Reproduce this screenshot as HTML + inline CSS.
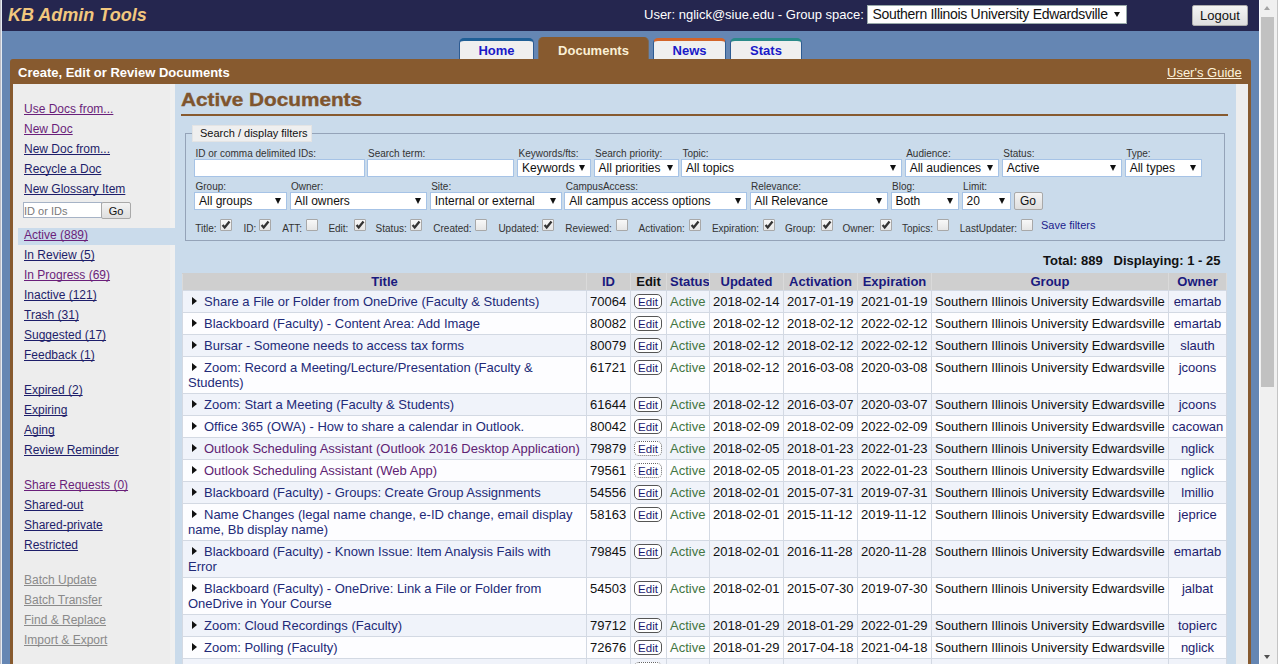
<!DOCTYPE html>
<html><head><meta charset="utf-8">
<style>
*{box-sizing:border-box}
html,body{margin:0;padding:0;width:1278px;height:664px;overflow:hidden;font-family:"Liberation Sans",sans-serif;background:#6586b3}
.abs{position:absolute}
#lstrip{left:0;top:0;width:2px;height:664px;background:#bcbcc4;border-right:1px solid #e6ecf4}
#hdr{left:2px;top:0;width:1257px;height:31px;background:#25264f}
#title{left:8px;top:5px;font-size:18px;font-weight:bold;font-style:italic;color:#f2c77e;white-space:nowrap}
#user{left:644px;top:7px;font-size:13px;color:#fff;white-space:nowrap}
#gsel{left:867px;top:5px;width:260px;height:19px;background:#fff;border:1px solid #9aa;font-size:14px;letter-spacing:-0.3px;color:#111;padding:0 0 0 4.5px;white-space:nowrap}
#gsel .ar{position:absolute;right:6px;top:6px;width:0;height:0;border-left:3.5px solid transparent;border-right:3.5px solid transparent;border-top:5.5px solid #111}
#logout{left:1192px;top:5px;width:56px;height:21px;background:linear-gradient(#f4f4f4,#dedede);border:1px solid #adadad;border-radius:2px;font-size:13px;color:#111;text-align:center;padding-top:2px}
#sb{left:1259px;top:0;width:19px;height:664px;background:#f0f0f0}
#sbth{left:1261px;top:17px;width:13px;height:370px;background:#c1c1c1}
.tab{position:absolute;top:38px;height:21px;background:#efefef;border-top:3px solid #1f5f96;border-left:1px solid #2d5b92;border-right:1px solid #2d5b92;border-radius:5px 5px 0 0;font-size:13px;font-weight:bold;color:#1a1ac8;text-align:center;padding-top:2px}
#box{left:10px;top:59px;width:1241px;height:620px;background:#875a2f;border-radius:3px 3px 0 0}
#boxh{left:18px;top:65px;font-size:13px;font-weight:bold;color:#fff;white-space:nowrap}
#guide{left:1167px;top:65px;font-size:13px;color:#fdf3dc;text-decoration:underline;text-decoration-skip-ink:none;white-space:nowrap}
#side{left:13px;top:84px;width:162px;height:600px;background:#ededed;border-right:5px solid #f0f0f0}
#content{left:175px;top:84px;width:1061px;height:600px;background:#cadbeb}
#rstrip{left:1236px;top:84px;width:12px;height:600px;background:#eeeeee}
.sl{position:absolute;left:24px;font-size:12px;white-space:nowrap;text-decoration:underline;text-decoration-skip-ink:none;color:#1e1e6a}
.sl.v{color:#6a1f7a}
.sl.g{color:#8a8a8a}
#activebar{left:18px;top:228px;width:157px;height:17px;background:#cadbeb}
#h1{left:181px;top:90px;font-size:18px;font-weight:bold;color:#7f552e;-webkit-text-stroke:0.35px #7f552e;white-space:nowrap;transform:scaleX(1.153);transform-origin:0 0}
#h1line{left:181px;top:114px;width:1047px;height:2px;background:#875a2f}
#fs{left:185px;top:133px;width:1040px;height:108px;border:1px solid #94a3b8}
#legend{left:192px;top:125px;width:120px;height:17px;background:#efefef;border:1px solid #e4e4e4;font-size:11px;color:#111;padding:1px 0 0 7px;white-space:nowrap}
.lb{position:absolute;font-size:10px;color:#333;white-space:nowrap}
.sel{position:absolute;height:18px;background:#fff;border:1px solid #a6c3e6;font-size:12px;color:#111;padding:1px 0 0 4px;white-space:nowrap;overflow:hidden}
.sel .ar{position:absolute;right:5px;top:5px;width:0;height:0;border-left:3.5px solid transparent;border-right:3.5px solid transparent;border-top:6px solid #111}
.inp{position:absolute;height:18px;background:#fff;border:1px solid #a6c3e6}
.btn{position:absolute;background:linear-gradient(#f4f4f4,#dedede);border:1px solid #a9a9a9;border-radius:2px;font-size:12px;color:#111;text-align:center}
.cl{position:absolute;top:223px;font-size:10px;color:#333;white-space:nowrap}
.cb{position:absolute;top:219px;width:12px;height:12px;border:1px solid #a8a8a8;border-radius:1px;background:linear-gradient(#f8f8f8,#e6e6e6)}
.cb svg{position:absolute;left:-1px;top:-1px}
#savef{left:1041px;top:219px;font-size:11px;color:#1c1c8c;white-space:nowrap}
#total{left:1043px;top:253px;font-size:13px;font-weight:bold;color:#111;white-space:nowrap}
table{position:absolute;left:182px;top:273px;border-collapse:collapse;table-layout:fixed;width:1045px;font-size:13px;line-height:15px}
td,th{border:1px solid #d3d9e3;padding:3px;vertical-align:top;overflow:hidden}
th{background:#cfcfcf;font-weight:bold;color:#1a1a7e;padding:0 3px 1px 3px;border-color:#cfcfcf #dadada;border-bottom-color:#d3d9e3;text-align:center}
tr.o td{background:#f0f3fa}
tr.e td{background:#fdfdff}
td.t{color:#222a78;padding-left:5px;padding-right:5px}
td.t.v{color:#5e2272}
.tri{display:inline-block;width:0;height:0;border-top:4px solid transparent;border-bottom:4px solid transparent;border-left:5px solid #111;margin:0 7px 0 4px;vertical-align:1px}
td.id{color:#111}
td.ed{padding:3px 0 0 3px;line-height:0}
.eb{display:block;width:28px;height:15px;border:1px solid #555;border-radius:5px;font-size:11.5px;line-height:13px;padding-top:1px;color:#1a1a70;text-align:center;background:#fff}
.eb.d{border:1px dotted #666}
td.st{color:#437543}
td.dt{color:#111}
td.gr{color:#111}
td.ow{color:#1c1c6e;text-align:center}
</style></head><body>
<div id="lstrip" class="abs"></div>
<div id="hdr" class="abs"></div>
<div id="title" class="abs">KB Admin Tools</div>
<div id="user" class="abs">User: nglick@siue.edu - Group space:</div>
<div id="gsel" class="abs">Southern Illinois University Edwardsville<span class="ar"></span></div>
<div id="logout" class="abs">Logout</div>
<div id="sb" class="abs"></div><div id="sbth" class="abs"></div><div class="abs" style="left:1259px;top:0;width:1px;height:664px;background:#fafcff"></div><div class="abs" style="left:1277px;top:0;width:1px;height:664px;background:#c4c4c4"></div><div class="abs" style="left:1264px;top:6px;width:0;height:0;border-left:3.5px solid transparent;border-right:3.5px solid transparent;border-bottom:4.5px solid #a3a3a3"></div><div class="abs" style="left:1264px;top:654.5px;width:0;height:0;border-left:3.5px solid transparent;border-right:3.5px solid transparent;border-top:4.5px solid #505050"></div>
<div class="tab" style="left:459px;width:75px;border-top-color:#1f5f96">Home</div>
<div class="tab" style="left:538px;width:111px;top:37px;height:22px;background:#875a2f;border-top:0;border-color:#7a6a5a;color:#fbf0d6;padding-top:6px">Documents</div>
<div class="tab" style="left:653px;width:73px;border-top-color:#d2642a">News</div>
<div class="tab" style="left:730px;width:72px;border-top-color:#2a8a8a">Stats</div>
<div id="box" class="abs"></div>
<div id="boxh" class="abs">Create, Edit or Review Documents</div>
<div id="guide" class="abs">User's Guide</div>
<div id="side" class="abs"></div><div id="content" class="abs"></div><div id="rstrip" class="abs"></div>
<div id="activebar" class="abs"></div>
<div class="sl v" style="top:102px">Use Docs from...</div>
<div class="sl v" style="top:122px">New Doc</div>
<div class="sl " style="top:142px">New Doc from...</div>
<div class="sl " style="top:162px">Recycle a Doc</div>
<div class="sl " style="top:182px">New Glossary Item</div>
<div class="sl v" style="top:228px">Active (889)</div>
<div class="sl " style="top:248px">In Review (5)</div>
<div class="sl v" style="top:268px">In Progress (69)</div>
<div class="sl " style="top:288px">Inactive (121)</div>
<div class="sl " style="top:308px">Trash (31)</div>
<div class="sl " style="top:328px">Suggested (17)</div>
<div class="sl " style="top:348px">Feedback (1)</div>
<div class="sl " style="top:383px">Expired (2)</div>
<div class="sl " style="top:403px">Expiring</div>
<div class="sl " style="top:423px">Aging</div>
<div class="sl " style="top:443px">Review Reminder</div>
<div class="sl v" style="top:478px">Share Requests (0)</div>
<div class="sl " style="top:498px">Shared-out</div>
<div class="sl " style="top:518px">Shared-private</div>
<div class="sl " style="top:538px">Restricted</div>
<div class="sl g" style="top:573px">Batch Update</div>
<div class="sl g" style="top:593px">Batch Transfer</div>
<div class="sl g" style="top:613px">Find &amp; Replace</div>
<div class="sl g" style="top:633px">Import &amp; Export</div>
<div class="inp" style="left:23px;top:202px;width:79px;height:16px;border-color:#a6b3c6;font-size:11px;color:#7a7a7a;padding:2px 0 0 0;white-space:nowrap">ID or IDs</div>
<div class="btn" style="left:101px;top:202px;width:30px;height:17px;font-size:11px;padding-top:2px">Go</div>
<div id="h1" class="abs">Active Documents</div>
<div id="h1line" class="abs"></div>
<div id="fs" class="abs"></div>
<div id="legend" class="abs">Search / display filters</div>
<div class="lb" style="left:195.5px;top:148px">ID or comma delimited IDs:</div>
<div class="inp" style="left:194px;top:159px;width:170.5px"></div>
<div class="lb" style="left:368.0px;top:148px">Search term:</div>
<div class="inp" style="left:366.5px;top:159px;width:147.0px"></div>
<div class="lb" style="left:518.5px;top:148px">Keywords/fts:</div>
<div class="sel" style="left:517px;top:159px;width:74px">Keywords<span class="ar"></span></div>
<div class="lb" style="left:595.0px;top:148px">Search priority:</div>
<div class="sel" style="left:593.5px;top:159px;width:85.0px">All priorities<span class="ar"></span></div>
<div class="lb" style="left:682.5px;top:148px">Topic:</div>
<div class="sel" style="left:681px;top:159px;width:221px">All topics<span class="ar"></span></div>
<div class="lb" style="left:906.2px;top:148px">Audience:</div>
<div class="sel" style="left:904.7px;top:159px;width:94.29999999999995px">All audiences<span class="ar"></span></div>
<div class="lb" style="left:1003.3px;top:148px">Status:</div>
<div class="sel" style="left:1001.8px;top:159px;width:120.20000000000005px">Active<span class="ar"></span></div>
<div class="lb" style="left:1126.2px;top:148px">Type:</div>
<div class="sel" style="left:1124.7px;top:159px;width:77.59999999999991px">All types<span class="ar"></span></div>
<div class="lb" style="left:195.5px;top:181px">Group:</div>
<div class="sel" style="left:194px;top:192px;width:93.19999999999999px">All groups<span class="ar"></span></div>
<div class="lb" style="left:291.0px;top:181px">Owner:</div>
<div class="sel" style="left:289.5px;top:192px;width:137.5px">All owners<span class="ar"></span></div>
<div class="lb" style="left:431.2px;top:181px">Site:</div>
<div class="sel" style="left:429.7px;top:192px;width:132.3px">Internal or external<span class="ar"></span></div>
<div class="lb" style="left:565.7px;top:181px">CampusAccess:</div>
<div class="sel" style="left:564.2px;top:192px;width:183.0999999999999px">All campus access options<span class="ar"></span></div>
<div class="lb" style="left:751.0px;top:181px">Relevance:</div>
<div class="sel" style="left:749.5px;top:192px;width:138.89999999999998px">All Relevance<span class="ar"></span></div>
<div class="lb" style="left:892.1px;top:181px">Blog:</div>
<div class="sel" style="left:890.6px;top:192px;width:68.69999999999993px">Both<span class="ar"></span></div>
<div class="lb" style="left:963.1px;top:181px">Limit:</div>
<div class="sel" style="left:961.6px;top:192px;width:49.39999999999998px">20<span class="ar"></span></div>
<div class="btn" style="left:1013.5px;top:192px;width:29px;height:18px;padding-top:1px">Go</div>
<div class="cl" style="left:195.2px">Title:</div>
<div class="cb" style="left:220px"><svg width="12" height="12"><path d="M2.6 6.1 L4.7 8.5 L9.5 2.6" fill="none" stroke="#333" stroke-width="2.3"/></svg></div>
<div class="cl" style="left:243.4px">ID:</div>
<div class="cb" style="left:259.3px"><svg width="12" height="12"><path d="M2.6 6.1 L4.7 8.5 L9.5 2.6" fill="none" stroke="#333" stroke-width="2.3"/></svg></div>
<div class="cl" style="left:282.3px">ATT:</div>
<div class="cb" style="left:306px"></div>
<div class="cl" style="left:328.4px">Edit:</div>
<div class="cb" style="left:353.5px"><svg width="12" height="12"><path d="M2.6 6.1 L4.7 8.5 L9.5 2.6" fill="none" stroke="#333" stroke-width="2.3"/></svg></div>
<div class="cl" style="left:375.6px">Status:</div>
<div class="cb" style="left:410.4px"><svg width="12" height="12"><path d="M2.6 6.1 L4.7 8.5 L9.5 2.6" fill="none" stroke="#333" stroke-width="2.3"/></svg></div>
<div class="cl" style="left:433.3px">Created:</div>
<div class="cb" style="left:475.4px"></div>
<div class="cl" style="left:498.4px">Updated:</div>
<div class="cb" style="left:542.2px"><svg width="12" height="12"><path d="M2.6 6.1 L4.7 8.5 L9.5 2.6" fill="none" stroke="#333" stroke-width="2.3"/></svg></div>
<div class="cl" style="left:565.2px">Reviewed:</div>
<div class="cb" style="left:616px"></div>
<div class="cl" style="left:638.6px">Activation:</div>
<div class="cb" style="left:689px"><svg width="12" height="12"><path d="M2.6 6.1 L4.7 8.5 L9.5 2.6" fill="none" stroke="#333" stroke-width="2.3"/></svg></div>
<div class="cl" style="left:711.9px">Expiration:</div>
<div class="cb" style="left:762.6px"><svg width="12" height="12"><path d="M2.6 6.1 L4.7 8.5 L9.5 2.6" fill="none" stroke="#333" stroke-width="2.3"/></svg></div>
<div class="cl" style="left:785px">Group:</div>
<div class="cb" style="left:820.5px"><svg width="12" height="12"><path d="M2.6 6.1 L4.7 8.5 L9.5 2.6" fill="none" stroke="#333" stroke-width="2.3"/></svg></div>
<div class="cl" style="left:842.4px">Owner:</div>
<div class="cb" style="left:880px"><svg width="12" height="12"><path d="M2.6 6.1 L4.7 8.5 L9.5 2.6" fill="none" stroke="#333" stroke-width="2.3"/></svg></div>
<div class="cl" style="left:901.9px">Topics:</div>
<div class="cb" style="left:937px"></div>
<div class="cl" style="left:959.8px">LastUpdater:</div>
<div class="cb" style="left:1020.8px"></div>
<div id="savef" class="abs">Save filters</div>
<div id="total" class="abs">Total: 889&nbsp;&nbsp;&nbsp;Displaying: 1 - 25</div>
<table><colgroup><col style="width:404px"><col style="width:44px"><col style="width:36px"><col style="width:43px"><col style="width:74px"><col style="width:74px"><col style="width:74px"><col style="width:237px"><col style="width:58px"></colgroup><tr><th>Title</th><th>ID</th><th style="color:#111">Edit</th><th>Status</th><th>Updated</th><th>Activation</th><th>Expiration</th><th>Group</th><th>Owner</th></tr><tr class="o"><td class="t"><span class="tri"></span>Share a File or Folder from OneDrive (Faculty &amp; Students)</td><td class="id">70064</td><td class="ed"><span class="eb">Edit</span></td><td class="st">Active</td><td class="dt">2018-02-14</td><td class="dt">2017-01-19</td><td class="dt">2021-01-19</td><td class="gr">Southern Illinois University Edwardsville</td><td class="ow">emartab</td></tr><tr class="e"><td class="t"><span class="tri"></span>Blackboard (Faculty) - Content Area: Add Image</td><td class="id">80082</td><td class="ed"><span class="eb">Edit</span></td><td class="st">Active</td><td class="dt">2018-02-12</td><td class="dt">2018-02-12</td><td class="dt">2022-02-12</td><td class="gr">Southern Illinois University Edwardsville</td><td class="ow">emartab</td></tr><tr class="o"><td class="t"><span class="tri"></span>Bursar - Someone needs to access tax forms</td><td class="id">80079</td><td class="ed"><span class="eb">Edit</span></td><td class="st">Active</td><td class="dt">2018-02-12</td><td class="dt">2018-02-12</td><td class="dt">2022-02-12</td><td class="gr">Southern Illinois University Edwardsville</td><td class="ow">slauth</td></tr><tr class="e"><td class="t"><span class="tri"></span>Zoom: Record a Meeting/Lecture/Presentation (Faculty &amp; Students)</td><td class="id">61721</td><td class="ed"><span class="eb">Edit</span></td><td class="st">Active</td><td class="dt">2018-02-12</td><td class="dt">2016-03-08</td><td class="dt">2020-03-08</td><td class="gr">Southern Illinois University Edwardsville</td><td class="ow">jcoons</td></tr><tr class="o"><td class="t"><span class="tri"></span>Zoom: Start a Meeting (Faculty &amp; Students)</td><td class="id">61644</td><td class="ed"><span class="eb">Edit</span></td><td class="st">Active</td><td class="dt">2018-02-12</td><td class="dt">2016-03-07</td><td class="dt">2020-03-07</td><td class="gr">Southern Illinois University Edwardsville</td><td class="ow">jcoons</td></tr><tr class="e"><td class="t"><span class="tri"></span>Office 365 (OWA) - How to share a calendar in Outlook.</td><td class="id">80042</td><td class="ed"><span class="eb">Edit</span></td><td class="st">Active</td><td class="dt">2018-02-09</td><td class="dt">2018-02-09</td><td class="dt">2022-02-09</td><td class="gr">Southern Illinois University Edwardsville</td><td class="ow">cacowan</td></tr><tr class="o"><td class="t v"><span class="tri"></span>Outlook Scheduling Assistant (Outlook 2016 Desktop Application)</td><td class="id">79879</td><td class="ed"><span class="eb d">Edit</span></td><td class="st">Active</td><td class="dt">2018-02-05</td><td class="dt">2018-01-23</td><td class="dt">2022-01-23</td><td class="gr">Southern Illinois University Edwardsville</td><td class="ow">nglick</td></tr><tr class="e"><td class="t v"><span class="tri"></span>Outlook Scheduling Assistant (Web App)</td><td class="id">79561</td><td class="ed"><span class="eb d">Edit</span></td><td class="st">Active</td><td class="dt">2018-02-05</td><td class="dt">2018-01-23</td><td class="dt">2022-01-23</td><td class="gr">Southern Illinois University Edwardsville</td><td class="ow">nglick</td></tr><tr class="o"><td class="t"><span class="tri"></span>Blackboard (Faculty) - Groups: Create Group Assignments</td><td class="id">54556</td><td class="ed"><span class="eb">Edit</span></td><td class="st">Active</td><td class="dt">2018-02-01</td><td class="dt">2015-07-31</td><td class="dt">2019-07-31</td><td class="gr">Southern Illinois University Edwardsville</td><td class="ow">lmillio</td></tr><tr class="e"><td class="t"><span class="tri"></span>Name Changes (legal name change, e-ID change, email display name, Bb display name)</td><td class="id">58163</td><td class="ed"><span class="eb">Edit</span></td><td class="st">Active</td><td class="dt">2018-02-01</td><td class="dt">2015-11-12</td><td class="dt">2019-11-12</td><td class="gr">Southern Illinois University Edwardsville</td><td class="ow">jeprice</td></tr><tr class="o"><td class="t"><span class="tri"></span>Blackboard (Faculty) - Known Issue: Item Analysis Fails with Error</td><td class="id">79845</td><td class="ed"><span class="eb">Edit</span></td><td class="st">Active</td><td class="dt">2018-02-01</td><td class="dt">2016-11-28</td><td class="dt">2020-11-28</td><td class="gr">Southern Illinois University Edwardsville</td><td class="ow">emartab</td></tr><tr class="e"><td class="t"><span class="tri"></span>Blackboard (Faculty) - OneDrive: Link a File or Folder from OneDrive in Your Course</td><td class="id">54503</td><td class="ed"><span class="eb">Edit</span></td><td class="st">Active</td><td class="dt">2018-02-01</td><td class="dt">2015-07-30</td><td class="dt">2019-07-30</td><td class="gr">Southern Illinois University Edwardsville</td><td class="ow">jalbat</td></tr><tr class="o"><td class="t"><span class="tri"></span>Zoom: Cloud Recordings (Faculty)</td><td class="id">79712</td><td class="ed"><span class="eb">Edit</span></td><td class="st">Active</td><td class="dt">2018-01-29</td><td class="dt">2018-01-29</td><td class="dt">2022-01-29</td><td class="gr">Southern Illinois University Edwardsville</td><td class="ow">topierc</td></tr><tr class="e"><td class="t"><span class="tri"></span>Zoom: Polling (Faculty)</td><td class="id">72676</td><td class="ed"><span class="eb">Edit</span></td><td class="st">Active</td><td class="dt">2018-01-29</td><td class="dt">2017-04-18</td><td class="dt">2021-04-18</td><td class="gr">Southern Illinois University Edwardsville</td><td class="ow">nglick</td></tr><tr class="o"><td class="t v"><span class="tri"></span>Zoom: Screen Sharing (Faculty)</td><td class="id">72677</td><td class="ed"><span class="eb d">Edit</span></td><td class="st">Active</td><td class="dt">2018-01-29</td><td class="dt">2017-04-18</td><td class="dt">2021-04-18</td><td class="gr">Southern Illinois University Edwardsville</td><td class="ow">nglick</td></tr></table>
</body></html>
